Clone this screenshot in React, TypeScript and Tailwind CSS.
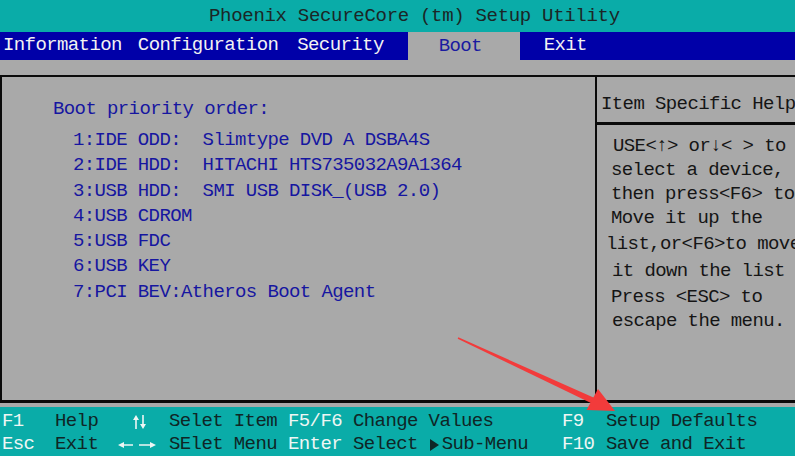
import React from "react";

const mono = "font-['Liberation_Mono','DejaVu_Sans_Mono',monospace] text-[19px] tracking-[-0.6px] whitespace-pre";

function UpDown() {
  return (
    <svg width="16" height="16" viewBox="0 0 16 16" className="inline-block">
      <g stroke="#eef6f4" strokeWidth="1.6" fill="#eef6f4">
        <line x1="4" y1="3" x2="4" y2="15" />
        <polygon points="4,1 1,6 7,6" stroke="none" />
        <line x1="11" y1="1" x2="11" y2="13" />
        <polygon points="11,15 8,10 14,10" stroke="none" />
      </g>
    </svg>
  );
}

function LeftRight() {
  return (
    <svg width="38" height="10" viewBox="0 0 38 10" className="inline-block">
      <g stroke="#eef6f4" strokeWidth="1.5" fill="#eef6f4">
        <line x1="3" y1="5" x2="15" y2="5" />
        <polygon points="0,5 6,2 6,8" stroke="none" />
        <line x1="21" y1="5" x2="34" y2="5" />
        <polygon points="38,5 32,2 32,8" stroke="none" />
      </g>
    </svg>
  );
}

function Tri() {
  return (
    <svg width="11" height="14" viewBox="0 0 11 14" className="inline-block mr-[2px]">
      <polygon points="1,1 10,7 1,13" fill="#0f2626" />
    </svg>
  );
}

const helpLines: { t: string; h: string; pl: string }[] = [
  { t: "USE<↑> or↓< > to", h: "h-[24px]", pl: "pl-[16px]" },
  { t: "select a device,", h: "h-[24px]", pl: "pl-[14px]" },
  { t: "then press<F6> to", h: "h-[24px]", pl: "pl-[14px]" },
  { t: "Move it up the", h: "h-[26px]", pl: "pl-[14px]" },
  { t: "list,or<F6>to move", h: "h-[27px]", pl: "pl-[9px]" },
  { t: "it down the list", h: "h-[26px]", pl: "pl-[15px]" },
  { t: "Press <ESC> to", h: "h-[24px]", pl: "pl-[14px]" },
  { t: "escape the menu.", h: "h-[24px]", pl: "pl-[15px]" },
];

const bootItems = [
  "1:IDE ODD:  Slimtype DVD A DSBA4S",
  "2:IDE HDD:  HITACHI HTS735032A9A1364",
  "3:USB HDD:  SMI USB DISK_(USB 2.0)",
  "4:USB CDROM",
  "5:USB FDC",
  "6:USB KEY",
  "7:PCI BEV:Atheros Boot Agent",
];

export default function App() {
  return (
    <div className={`relative w-[795px] h-[456px] overflow-hidden bg-[#a9a9a9] ${mono}`}>
      {/* Title */}
      <div className="h-[32px] bg-[#0aaca8] text-[#1b2626] pl-[209px] leading-[32px] tracking-[-0.3px]">
        Phoenix SecureCore (tm) Setup Utility
      </div>
      {/* Menu bar */}
      <div className="h-[28px] bg-[#0000a8] flex text-[#f2f2f2] leading-[26px]">
        <span className="ml-[3px]">Information</span>
        <span className="ml-[16px]">Configuration</span>
        <span className="ml-[19px]">Security</span>
        <span className="ml-[24px] w-[112px] bg-[#a9a9a9] text-[#1a1aa0] pl-[31px] leading-[28px]">Boot</span>
        <span className="ml-[24px]">Exit</span>
      </div>
      {/* grey gap */}
      <div className="h-[15px]" />
      {/* main box */}
      <div className="h-[328px] border-t-[2px] border-l-[2px] border-b-[3px] border-[#0a0a0a] flex">
        <div className="w-[593px] shrink-0 pt-[20px] pl-[51px] text-[#1616a0]">
          <div className="leading-[25px] mb-[6px]">Boot priority order:</div>
          <div className="pl-[20px]">
            {bootItems.map((b) => (
              <div key={b} className="leading-[25.3px]">{b}</div>
            ))}
          </div>
        </div>
        <div className="flex-1 min-w-0 border-l-[2px] border-[#0a0a0a] text-[#151515] flex flex-col">
          <div className="h-[48px] border-b-[3px] border-[#0a0a0a] pl-[4px] pt-[15px] leading-[25px]">
            Item Specific Help
          </div>
          <div className="pt-[9px]">
            {helpLines.map((l) => (
              <div key={l.t} className={`${l.h} ${l.pl} leading-[24px]`}>{l.t}</div>
            ))}
          </div>
        </div>
      </div>
      {/* grey gap */}
      <div className="h-[4px]" />
      {/* Footer */}
      <div className="h-[49px] bg-[#0aaca8] pt-[3px] pl-[2px]">
        <div className="grid grid-cols-[53px_63px_51px_119px_65px_209px_44px_1fr] leading-[23px]">
          <span className="text-[#eef6f4]">F1</span>
          <span className="text-[#0f2626]">Help</span>
          <span className="flex items-center pl-[14px]"><UpDown /></span>
          <span className="text-[#0f2626]">Selet Item</span>
          <span className="text-[#eef6f4]">F5/F6</span>
          <span className="text-[#0f2626]">Change Values</span>
          <span className="text-[#eef6f4]">F9</span>
          <span className="text-[#0f2626]">Setup Defaults</span>

          <span className="text-[#eef6f4]">Esc</span>
          <span className="text-[#0f2626]">Exit</span>
          <span className="flex items-center"><LeftRight /></span>
          <span className="text-[#0f2626]">SElet Menu</span>
          <span className="text-[#eef6f4]">Enter</span>
          <span className="text-[#0f2626] flex items-center">
            <span>Select </span>
            <Tri />
            <span>Sub-Menu</span>
          </span>
          <span className="text-[#eef6f4]">F10</span>
          <span className="text-[#0f2626]">Save and Exit</span>
        </div>
      </div>
      {/* red annotation arrow */}
      <svg className="absolute inset-0 pointer-events-none" width="795" height="456" viewBox="0 0 795 456">
        <polygon points="458.3,337.3 594,397.8 591.4,403.2 457.7,338.7" fill="#f23b3b" />
        <polygon points="615,411 586.5,410 598,389" fill="#f23b3b" />
      </svg>
    </div>
  );
}
